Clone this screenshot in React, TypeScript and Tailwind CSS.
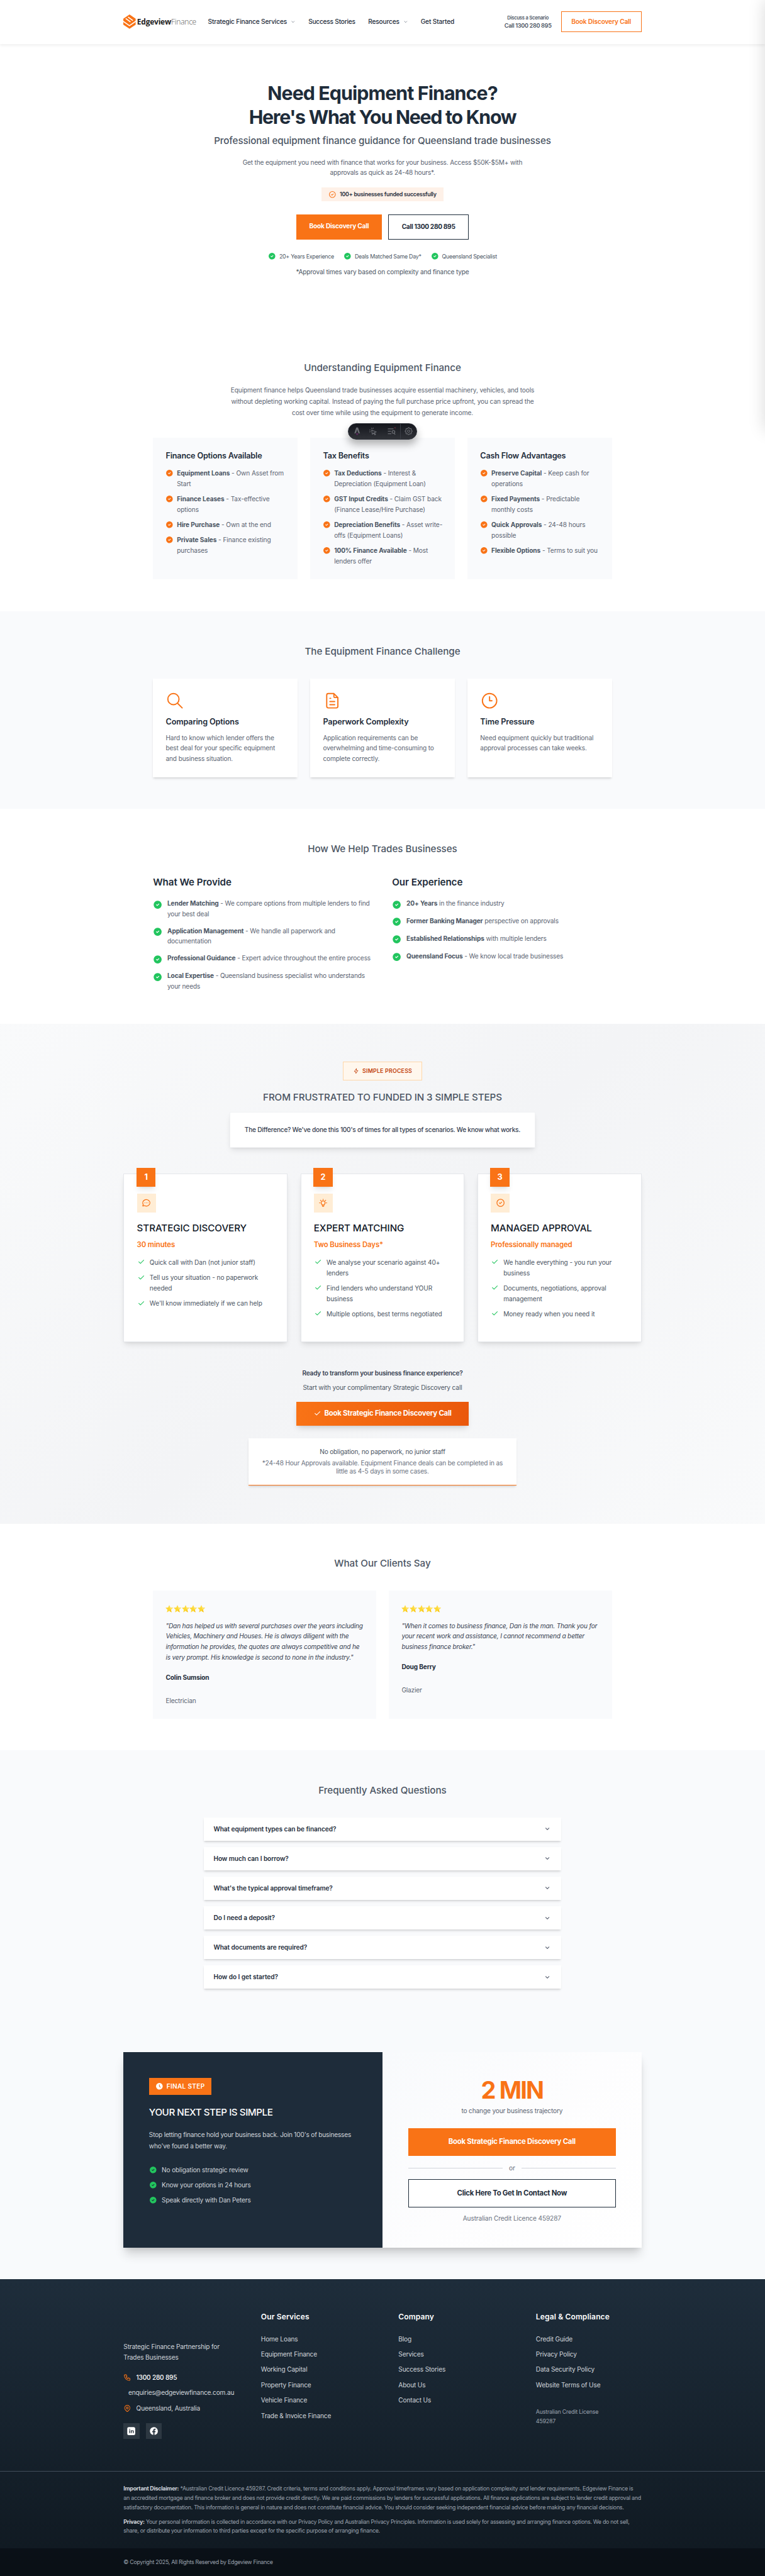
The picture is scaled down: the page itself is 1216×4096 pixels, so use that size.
import type { ReactNode } from "react";

function Svg({ d, className, sw = 2 }: { d: string; className: string; sw?: number }) {
  return (
    <svg viewBox="0 0 24 24" className={className} fill="none" stroke="currentColor" strokeWidth={sw} strokeLinecap="round" strokeLinejoin="round">
      <path d={d} />
    </svg>
  );
}

const P = {
  chevron: "M6 9l6 6l6 -6",
  check: "M5 12l5 5l10 -10",
  circleCheck: "M12 12m-9 0a9 9 0 1 0 18 0a9 9 0 1 0 -18 0M9 12l2 2l4 -4",
  search: "M10 10m-7 0a7 7 0 1 0 14 0a7 7 0 1 0 -14 0M21 21l-6 -6",
  file: "M14 3v4a1 1 0 0 0 1 1h4M17 21h-10a2 2 0 0 1 -2 -2v-14a2 2 0 0 1 2 -2h7l5 5v11a2 2 0 0 1 -2 2zM9 9h1M9 13h6M9 17h6",
  clock: "M3 12a9 9 0 1 0 18 0a9 9 0 0 0 -18 0M12 7v5h3",
  bolt: "M13 3v7h6l-8 11v-7h-6l8 -11",
  chat: "M3 20l1.3 -3.9c-2.324 -3.437 -1.426 -7.872 2.1 -10.374c3.526 -2.501 8.59 -2.296 11.845 .48c3.255 2.777 3.695 7.266 1.029 10.501c-2.666 3.235 -7.615 4.215 -11.574 2.293l-4.7 1M12 12v.01M8 12v.01M16 12v.01",
  bulb: "M3 12h1m8 -9v1m8 8h1m-15.4 -6.4l.7 .7m12.1 -.7l-.7 .7M9 16a5 5 0 1 1 6 0a3.5 3.5 0 0 0 -1 3a2 2 0 0 1 -4 0a3.5 3.5 0 0 0 -1 -3M9.7 17h4.6",
  phone: "M5 4h4l2 5l-2.5 1.5a11 11 0 0 0 5 5l1.5 -2.5l5 2v4a2 2 0 0 1 -2 2a16 16 0 0 1 -15 -15a2 2 0 0 1 2 -2",
  pin: "M9 11a3 3 0 1 0 6 0a3 3 0 0 0 -6 0M17.657 16.657l-4.243 4.243a2 2 0 0 1 -2.827 0l-4.244 -4.243a8 8 0 1 1 11.314 0z",
  gear: "M10.325 4.317c.426 -1.756 2.924 -1.756 3.35 0a1.724 1.724 0 0 0 2.573 1.066c1.543 -.94 3.31 .826 2.37 2.37a1.724 1.724 0 0 0 1.065 2.572c1.756 .426 1.756 2.924 0 3.35a1.724 1.724 0 0 0 -1.066 2.573c.94 1.543 -.826 3.31 -2.37 2.37a1.724 1.724 0 0 0 -2.572 1.065c-.426 1.756 -2.924 1.756 -3.35 0a1.724 1.724 0 0 0 -2.573 -1.066c-1.543 .94 -3.31 -.826 -2.37 -2.37a1.724 1.724 0 0 0 -1.065 -2.572c-1.756 -.426 -1.756 -2.924 0 -3.35a1.724 1.724 0 0 0 1.066 -2.573c-.94 -1.543 .826 -3.31 2.37 -2.37c1 .608 2.296 .07 2.572 -1.065zM9 12a3 3 0 1 0 6 0a3 3 0 0 0 -6 0",
};

function FilledCheck({ className }: { className: string }) {
  return (
    <svg viewBox="0 0 24 24" className={className} fill="currentColor">
      <path d="M17 3.34a10 10 0 1 1 -14.995 8.984l-.005 -.324l.005 -.324a10 10 0 0 1 14.995 -8.336zm-1.293 5.953a1 1 0 0 0 -1.32 -.083l-.094 .083l-3.293 3.292l-1.293 -1.292l-.094 -.083a1 1 0 0 0 -1.403 1.403l.083 .094l2 2l.094 .083a1 1 0 0 0 1.226 0l.094 -.083l4 -4l.083 -.094a1 1 0 0 0 -.083 -1.32z" />
    </svg>
  );
}

function FilledClock({ className }: { className: string }) {
  return (
    <svg viewBox="0 0 24 24" className={className} fill="currentColor">
      <path d="M17 3.34a10 10 0 1 1 -14.995 8.984l-.005 -.324l.005 -.324a10 10 0 0 1 14.995 -8.336zm-5 2.66a1 1 0 0 0 -.993 .883l-.007 .117v5l.009 .131a1 1 0 0 0 .197 .477l.087 .1l3 3l.094 .082a1 1 0 0 0 1.226 0l.094 -.083l.083 -.094a1 1 0 0 0 0 -1.226l-.083 -.094l-2.707 -2.708v-4.585l-.007 -.117a1 1 0 0 0 -.993 -.883z" />
    </svg>
  );
}

function Header() {
  return (
    <header className="relative h-[110px] bg-white shadow-[0_4px_6px_rgba(0,0,0,0.05)]">
      <div className="mx-auto flex h-full w-[1300px] items-center">
        <svg viewBox="30 52 93 107" className="h-9 w-[31px]">
          <path d="M77 52L123 83V128L77 159L30 128V83Z" fill="#f97316" />
          <path d="M26 101L76 136L128 100M48 82L84 108M66 71L102 97" fill="none" stroke="#fff" strokeWidth="8" />
        </svg>
        <span className="ml-[3px] w-[147px] font-['Open_Sans'] text-[19px] tracking-[-0.02em] whitespace-nowrap text-[#222]">
          <b>Edgeview</b>
          <span className="font-light text-[#555]">Finance</span>
        </span>
        <nav className="ml-[31px] flex items-center font-medium whitespace-nowrap text-[#1e2c3a]">
          <span className="w-[199px]">Strategic Finance Services</span>
          <Svg d={P.chevron} className="ml-2 size-3 text-gray-600" />
          <span className="ml-[33px] w-[118px] tracking-[-0.021em]">Success Stories</span>
          <span className="ml-[32px] w-[79px]">Resources</span>
          <Svg d={P.chevron} className="ml-[9px] size-3 text-gray-600" />
          <span className="ml-[32px]">Get Started</span>
        </nav>
        <div className="ml-auto mr-[24px] flex flex-col items-center font-semibold text-[#4b5563]">
          <span className="text-[12px] leading-[18px] tracking-[-0.027em]">Discuss a Scenario</span>
          <span className="text-[14.4px] leading-[18px] tracking-[-0.035em]">Call 1300 280 895</span>
        </div>
        <div className="flex h-[52px] w-[202px] items-center justify-center border-2 border-[#f97316] font-semibold text-[#f97316]">Book Discovery Call</div>
      </div>
    </header>
  );
}

function Hero() {
  return (
    <section className="flex h-[713px] flex-col items-center pt-[94px] text-[#4b5563]">
      <h1 className="text-center text-[48px] leading-[60px] font-bold tracking-[-0.043em] text-[#1e2c3a]">
        <span className="tracking-[-0.031em]">Need Equipment Finance?</span>
        <br />
        Here's What You Need to Know
      </h1>
      <p className="mt-[12px] text-[24px] leading-[36px] font-[450] tracking-[-0.008em]">Professional equipment finance guidance for Queensland trade businesses</p>
      <p className="mt-[22px] text-center leading-[26px] tracking-[-0.017em] text-[#5b6472]">
        Get the equipment you need with finance that works for your business. Access $50K-$5M+ with
        <br />
        approvals as quick as 24-48 hours*.
      </p>
      <div className="mt-[24px] flex h-9 w-[305px] items-center justify-center gap-2 bg-[#fef1e8] text-[14px] font-semibold tracking-[-0.0255em] text-[#1e2c3a]">
        <Svg d={P.circleCheck} className="size-5 text-[#f97316]" />
        100+ businesses funded successfully
      </div>
      <div className="mt-8 flex gap-4">
        <div className="flex h-[63px] w-[215px] items-center justify-center bg-[#f97316] pb-[3px] font-bold tracking-[-0.02em] text-white">Book Discovery Call</div>
        <div className="flex h-[63px] w-[202px] items-center justify-center border-2 border-[#1e2c3a] font-bold tracking-[-0.03em] text-[#1e2c3a]">Call 1300 280 895</div>
      </div>
      <div className="mt-[30px] flex gap-6 text-[14px] leading-6 tracking-[-0.03em]">
        {["20+ Years Experience", "Deals Matched Same Day*", "Queensland Specialist"].map((t) => (
          <span key={t} className="flex items-center gap-2">
            <FilledCheck className="size-5 text-[#22c55e]" />
            {t}
          </span>
        ))}
      </div>
      <p className="mt-[14px] leading-[26px] tracking-[-0.017em]">*Approval times vary based on complexity and finance type</p>
    </section>
  );
}

function Title({ children }: { children: ReactNode }) {
  return <h2 className="text-center text-[24px] leading-10 font-[450] tracking-[-0.002em] text-[#4b5563]">{children}</h2>;
}

type Item = [string, ReactNode];
const options: { title: string; items: Item[] }[] = [
  {
    title: "Finance Options Available",
    items: [
      ["Equipment Loans", <> - Own Asset from<br />Start</>],
      ["Finance Leases", <> - Tax-effective<br />options</>],
      ["Hire Purchase", " - Own at the end"],
      ["Private Sales", <> - Finance existing<br />purchases</>],
    ],
  },
  {
    title: "Tax Benefits",
    items: [
      ["Tax Deductions", <> - Interest &amp;<br />Depreciation (Equipment Loan)</>],
      ["GST Input Credits", <> - Claim GST back<br />(Finance Lease/Hire Purchase)</>],
      ["Depreciation Benefits", <> - Asset write-<br />offs (Equipment Loans)</>],
      ["100% Finance Available", <> - Most<br />lenders offer</>],
    ],
  },
  {
    title: "Cash Flow Advantages",
    items: [
      ["Preserve Capital", <> - Keep cash for<br />operations</>],
      ["Fixed Payments", <> - Predictable<br />monthly costs</>],
      ["Quick Approvals", <> - 24-48 hours<br />possible</>],
      ["Flexible Options", " - Terms to suit you"],
    ],
  },
];

function DevToolbar() {
  return (
    <div className="absolute top-[239px] left-[873px] z-10 flex h-[42px] w-[174px] items-center rounded-full border border-[#2b2e36] bg-linear-to-b from-[#15171d] to-[#303238] text-[#6b6d73] shadow-[0_12px_20px_rgba(0,0,0,0.3)]">
      <svg viewBox="0 0 20 24" className="ml-[13px] h-[22px] w-[18px]">
        <path d="M7.5 1h5L18 18l-5-2-3-9-3 9-5 2z" fill="currentColor" />
        <path d="M6 17c2 1 6 1 8 0 0 3-2 3-4 6-2-3-4-3-4-6z" fill="#5b2a5c" />
      </svg>
      <svg viewBox="0 0 24 24" className="ml-[22px] size-5" fill="none" stroke="currentColor" strokeWidth="2" strokeLinejoin="round" strokeLinecap="round">
        <path d="M7 7l14 6-6 2 4 5-2 2-4-6-4 4zM7 1v2M12 1l-1 2M1 7h2M1 13l2-1" />
      </svg>
      <svg viewBox="0 0 24 24" className="ml-[25px] size-[21px]" fill="none" stroke="currentColor" strokeWidth="2.2">
        <path d="M1 5h16M1 12h9M1 19h10M22 22l-3-4" />
        <circle cx="17" cy="14" r="4" />
        <circle cx="22" cy="2" r="3" fill="#4a2430" stroke="none" />
      </svg>
      <span className="ml-[11px] h-full w-px bg-[#3a3d45]" />
      <Svg d={P.gear} className="ml-[8px] size-6" sw={1.8} />
    </div>
  );
}

function Understanding() {
  return (
    <section className="relative h-[712px] pt-20">
      <Title>Understanding Equipment Finance</Title>
      <p className="mt-6 text-center leading-7 tracking-[-0.011em] text-[#5b6472]">
        Equipment finance helps Queensland trade businesses acquire essential machinery, vehicles, and tools
        <br />
        without depleting working capital. Instead of paying the full purchase price upfront, you can spread the
        <br />
        cost over time while using the equipment to generate income.
      </p>
      <DevToolbar />
      <div className="mx-auto mt-12 grid w-[1152px] grid-cols-3 gap-8">
        {options.map((c) => (
          <div key={c.title} className="h-[356px] bg-[#f9fafc] px-8 pt-8">
            <h3 className="text-[20px] leading-[28px] font-semibold tracking-[-0.016em] text-[#1e2c3a]">{c.title}</h3>
            <ul className="mt-4 flex flex-col gap-3 leading-[26.4px] tracking-[-0.009em] whitespace-nowrap text-[#5b6472]">
              {c.items.map(([b, t]) => (
                <li key={b} className="flex gap-2">
                  <FilledCheck className="mt-[3px] size-5 shrink-0 text-[#f97316]" />
                  <span>
                    <b className="text-[#4b5563]">{b}</b>
                    {t}
                  </span>
                </li>
              ))}
            </ul>
          </div>
        ))}
      </div>
    </section>
  );
}

const challenges: [string, string, ReactNode][] = [
  [P.search, "Comparing Options", <>Hard to know which lender offers the<br />best deal for your specific equipment<br />and business situation.</>],
  [P.file, "Paperwork Complexity", <>Application requirements can be<br />overwhelming and time-consuming to<br />complete correctly.</>],
  [P.clock, "Time Pressure", <>Need equipment quickly but traditional<br />approval processes can take weeks.</>],
];

function Challenge() {
  return (
    <section className="h-[496px] bg-[#f9fafc] pt-20">
      <Title>The Equipment Finance Challenge</Title>
      <div className="mx-auto mt-12 grid w-[1152px] grid-cols-3 gap-8">
        {challenges.map(([d, t, p]) => (
          <div key={t} className="h-[248px] bg-white px-8 pt-8 shadow-[0_4px_6px_-1px_rgba(0,0,0,0.12),0_2px_4px_-1px_rgba(0,0,0,0.06)]">
            <Svg d={d} className="size-12 text-[#f97316]" sw={1.5} />
            <h3 className="mt-4 text-[20px] leading-7 font-semibold tracking-[-0.012em] text-[#1e2c3a]">{t}</h3>
            <p className="mt-3 leading-[26.4px] tracking-[-0.013em] whitespace-nowrap text-[#5b6472]">{p}</p>
          </div>
        ))}
      </div>
    </section>
  );
}

const provide: Item[] = [
  ["Lender Matching", <> - We compare options from multiple lenders to find<br />your best deal</>],
  ["Application Management", <> - We handle all paperwork and<br />documentation</>],
  ["Professional Guidance", " - Expert advice throughout the entire process"],
  ["Local Expertise", <> - Queensland business specialist who understands<br />your needs</>],
];
const experience: Item[] = [
  ["20+ Years", " in the finance industry"],
  ["Former Banking Manager", " perspective on approvals"],
  ["Established Relationships", " with multiple lenders"],
  ["Queensland Focus", " - We know local trade businesses"],
];

function HelpList({ title, items }: { title: string; items: Item[] }) {
  return (
    <div>
      <h3 className="text-[24px] leading-8 font-semibold tracking-[-0.006em] text-[#1e2c3a]">{title}</h3>
      <ul className="mt-6 flex flex-col gap-4 leading-[26.4px] tracking-[-0.013em] whitespace-nowrap text-[#5b6472]">
        {items.map(([b, t]) => (
          <li key={b} className="flex gap-3">
            <FilledCheck className="mt-1 size-6 shrink-0 text-[#22c55e]" />
            <span>
              <b className="text-[#4b5563]">{b}</b>
              {t}
            </span>
          </li>
        ))}
      </ul>
    </div>
  );
}

function Help() {
  return (
    <section className="h-[539px] pt-20">
      <Title>How We Help Trades Businesses</Title>
      <div className="mx-auto mt-12 grid w-[1152px] grid-cols-2 gap-12">
        <HelpList title="What We Provide" items={provide} />
        <HelpList title="Our Experience" items={experience} />
      </div>
    </section>
  );
}

const steps: { icon: string; title: string; sub: string; items: ReactNode[] }[] = [
  { icon: P.chat, title: "STRATEGIC DISCOVERY", sub: "30 minutes", items: ["Quick call with Dan (not junior staff)", <>Tell us your situation - no paperwork<br />needed</>, "We'll know immediately if we can help"] },
  { icon: P.bulb, title: "EXPERT MATCHING", sub: "Two Business Days*", items: [<>We analyse your scenario against 40+<br />lenders</>, <>Find lenders who understand YOUR<br />business</>, "Multiple options, best terms negotiated"] },
  { icon: P.circleCheck, title: "MANAGED APPROVAL", sub: "Professionally managed", items: [<>We handle everything - you run your<br />business</>, <>Documents, negotiations, approval<br />management</>, "Money ready when you need it"] },
];

function Process() {
  return (
    <section className="flex h-[1255.5px] flex-col items-center bg-linear-135 from-[#f9fafb] via-[#f3f4f6] to-[#f9fafb] pt-[96px]">
      <div className="flex h-[46px] w-[200px] items-center justify-center gap-2 border border-[#fed7aa] bg-[#fff7ed] text-[14px] font-semibold tracking-[0.02em] text-[#c2410c]">
        <Svg d={P.bolt} className="size-4" />
        SIMPLE PROCESS
      </div>
      <h2 className="mt-[23px] text-[24px] leading-10 font-[450] tracking-[-0.007em] text-[#4b5563]">FROM FRUSTRATED TO FUNDED IN 3 SIMPLE STEPS</h2>
      <div className="mt-[17px] flex h-[90px] w-[768px] items-center justify-center border border-[#f1f2f4] bg-white font-medium tracking-[-0.0245em] text-[#374151] shadow-[0_10px_15px_-3px_rgba(0,0,0,0.1),0_4px_6px_-2px_rgba(0,0,0,0.06)]">
        The Difference? We've done this 100's of times for all types of scenarios. We know what works.
      </div>
      <div className="mt-[65px] grid w-[1300px] grid-cols-3 gap-8">
        {steps.map((s, i) => (
          <div key={s.title} className="relative h-[422px] border border-[#e5e7eb] bg-white pt-12 pl-8 shadow-[0_10px_15px_-3px_rgba(0,0,0,0.12),0_4px_6px_-2px_rgba(0,0,0,0.05)]">
            <div className="absolute -top-[17px] left-[31px] flex size-12 items-center justify-center bg-[#f97316] text-[20px] font-bold text-white shadow-lg">{i + 1}</div>
            <div className="flex size-12 items-center justify-center bg-[#ffedd5]">
              <Svg d={s.icon} className="size-6 text-[#f97316]" />
            </div>
            <h3 className="mt-6 text-[24px] leading-8 font-medium tracking-[-0.005em] whitespace-nowrap text-[#111827]">{s.title}</h3>
            <p className="mt-3 text-[18px] leading-7 font-semibold tracking-[-0.01em] text-[#f97316]">{s.sub}</p>
            <ul className="mt-4 flex flex-col gap-3 leading-[26.4px] tracking-[-0.008em] whitespace-nowrap text-[#4b5563]">
              {s.items.map((t, k) => (
                <li key={k} className="flex gap-3">
                  <Svg d={P.check} className="mt-[2px] size-5 shrink-0 text-[#22c55e]" />
                  <span>{t}</span>
                </li>
              ))}
            </ul>
          </div>
        ))}
      </div>
      <p className="mt-[66px] leading-[27px] font-semibold tracking-[-0.0226em] text-[#374151]">Ready to transform your business finance experience?</p>
      <p className="mt-[8px] leading-[26px] tracking-[-0.012em] text-[#4b5563]">Start with your complimentary Strategic Discovery call</p>
      <div className="mt-[23px] flex h-[60px] w-[433px] items-center justify-center gap-[7px] bg-linear-to-r from-[#f97316] to-[#ea580c] text-[18px] font-bold tracking-[-0.02em] text-white shadow-[0_10px_15px_-3px_rgba(0,0,0,0.15),0_4px_6px_-2px_rgba(0,0,0,0.05)]">
        <Svg d={P.check} className="size-5" />
        Book Strategic Finance Discovery Call
      </div>
      <div className="mt-8 h-[118px] w-[672px] border-b-2 border-[#f97316] bg-white pt-[21px] text-center leading-7 tracking-[-0.018em] text-[#4b5563] shadow-[0_4px_6px_-1px_rgba(0,0,0,0.12),0_2px_4px_-1px_rgba(0,0,0,0.06)]">
        No obligation, no paperwork, no junior staff
        <p className="mt-1 leading-5 text-[#6b7280]">
          *24-48 Hour Approvals available. Equipment Finance deals can be completed in as
          <br />
          little as 4-5 days in some cases.
        </p>
      </div>
    </section>
  );
}

function Stars() {
  return (
    <div className="flex h-[26px] items-center gap-px">
      {[0, 1, 2, 3, 4].map((i) => (
        <svg key={i} viewBox="0 0 24 24" className="size-[19px]">
          <path d="M12 .5l3.500 7.700 8.400.9-6.300 5.700 1.800 8.400L12 19l-7.400 4.200 1.800-8.400L.1 9.100l8.400-.9z" fill="#fdd835" />
          <path d="M12 .5l1.500 9.500 4.100 4.800 6.300-5.700-8.400-.9z" fill="#ffe36b" />
          <path d="M17 13l2.400 10.200-5-3z" fill="#f4b400" opacity=".6" />
        </svg>
      ))}
    </div>
  );
}

const reviews: [ReactNode, string, string][] = [
  [<>"Dan has helped us with several purchases over the years including<br />Vehicles, Machinery and Houses. He is always diligent with the<br />information he provides, the quotes are always competitive and he<br />is very prompt. His knowledge is second to none in the industry."</>, "Colin Sumsion", "Electrician"],
  [<>"When it comes to business finance, Dan is the man. Thank you for<br />your recent work and assistance, I cannot recommend a better<br />business finance broker."</>, "Doug Berry", "Glazier"],
];

function Reviews() {
  return (
    <section className="h-[569.5px] pt-20">
      <Title>What Our Clients Say</Title>
      <div className="mx-auto mt-12 grid w-[1152px] grid-cols-2 gap-8">
        {reviews.map(([q, n, r]) => (
          <div key={n} className="h-[322px] bg-[#f9fafc] px-8 pt-8 leading-[26.4px] whitespace-nowrap">
            <Stars />
            <p className="mt-[17px] tracking-[-0.018em] text-[#374151] italic">{q}</p>
            <p className="mt-6 font-bold tracking-[-0.015em] text-[#1e2c3a]">{n}</p>
            <p className="mt-8 text-[#5b6472]">{r}</p>
          </div>
        ))}
      </div>
    </section>
  );
}

const faqs = ["What equipment types can be financed?", "How much can I borrow?", "What's the typical approval timeframe?", "Do I need a deposit?", "What documents are required?", "How do I get started?"];

function Faq() {
  return (
    <section className="h-[678.5px] bg-[#f9fafc] pt-20">
      <Title>Frequently Asked Questions</Title>
      <div className="mx-auto mt-12 flex w-[896px] flex-col gap-4">
        {faqs.map((q) => (
          <div key={q} className="flex h-[58.4px] items-center justify-between bg-white pr-[26px] pl-6 font-semibold tracking-[-0.007em] text-[#1e2c3a] shadow-[0_4px_6px_-1px_rgba(0,0,0,0.12),0_2px_4px_-1px_rgba(0,0,0,0.08)]">
            {q}
            <Svg d={P.chevron} className="size-4 text-[#6b7280]" sw={3} />
          </div>
        ))}
      </div>
    </section>
  );
}

function FinalStep() {
  return (
    <section className="h-[649.5px] bg-[#f8fafc] pt-[79.5px]">
      <div className="mx-auto grid h-[490px] w-[1300px] grid-cols-2 shadow-[0_20px_25px_-5px_rgba(0,0,0,0.16),0_8px_12px_-5px_rgba(0,0,0,0.1)]">
        <div className="bg-[#1e2c3a] px-16 pt-16 whitespace-nowrap text-[#d1d5db]">
          <div className="flex h-[43px] w-[156px] items-center gap-2 bg-[#f97316] pl-4 font-semibold tracking-[0.027em] text-white">
            <FilledClock className="size-5" />
            FINAL STEP
          </div>
          <h2 className="mt-[23px] text-[24px] leading-10 font-[450] tracking-[-0.03em] text-white">YOUR NEXT STEP IS SIMPLE</h2>
          <p className="mt-6 leading-[27.6px] tracking-[-0.02em]">
            Stop letting finance hold your business back. Join 100's of businesses
            <br />
            who've found a better way.
          </p>
          <ul className="mt-8 flex flex-col gap-3 leading-[26.4px] tracking-[-0.016em]">
            {["No obligation strategic review", "Know your options in 24 hours", "Speak directly with Dan Peters"].map((t) => (
              <li key={t} className="flex items-center gap-3">
                <FilledCheck className="size-5 text-[#22c55e]" />
                {t}
              </li>
            ))}
          </ul>
        </div>
        <div className="flex flex-col items-center bg-linear-135 from-[#f8fafc] via-[#fdfdfe] to-white px-16 pt-16 text-[#5b6472]">
          <div className="text-[60px] leading-[60px] font-bold tracking-[-0.048em] text-[#f97316]">2 MIN</div>
          <p className="mt-[10px] leading-[26px] tracking-[-0.015em]">to change your business trajectory</p>
          <div className="mt-[31px] flex h-[68px] w-full items-center justify-center bg-[#f97316] text-[18px] font-bold tracking-[-0.02em] text-white">Book Strategic Finance Discovery Call</div>
          <div className="mt-[18px] flex w-full items-center gap-4 leading-[26px] text-[#6b7280]">
            <span className="h-px flex-1 bg-[#d1d5db]" />
            or
            <span className="h-px flex-1 bg-[#d1d5db]" />
          </div>
          <div className="mt-[15px] flex h-[72px] w-full items-center justify-center border-2 border-[#1e2c3a] bg-white text-[18px] font-bold tracking-[-0.024em] text-[#1e2c3a]">Click Here To Get In Contact Now</div>
          <p className="mt-[14px] leading-[26px] tracking-[-0.011em] text-[#6b7280]">Australian Credit Licence 459287</p>
        </div>
      </div>
    </section>
  );
}

const columns: [string, string[]][] = [
  ["Our Services", ["Home Loans", "Equipment Finance", "Working Capital", "Property Finance", "Vehicle Finance", "Trade & Invoice Finance"]],
  ["Company", ["Blog", "Services", "Success Stories", "About Us", "Contact Us"]],
  ["Legal & Compliance", ["Credit Guide", "Privacy Policy", "Data Security Policy", "Website Terms of Use"]],
];

function Footer() {
  return (
    <footer className="h-[744px] bg-linear-to-b from-[#1e2d3b] to-[#0f1820] text-[#d1d5db]">
      <div className="mx-auto grid h-[481px] w-[1300px] grid-cols-4 gap-20 pt-20 whitespace-nowrap">
        <div className="pt-[76px]">
          <p className="leading-[27px]">
            Strategic Finance Partnership for
            <br />
            Trades Businesses
          </p>
          <p className="mt-[23px] flex items-center gap-3 leading-[26.4px] font-medium tracking-[-0.02em] text-white">
            <Svg d={P.phone} className="size-5 text-[#f97316]" />
            1300 280 895
          </p>
          <p className="mt-3 pl-3 leading-[26.4px] tracking-[-0.017em]">enquiries@edgeviewfinance.com.au</p>
          <p className="mt-3 flex items-center gap-3 leading-[26.4px]">
            <Svg d={P.pin} className="size-5 text-[#f97316]" />
            Queensland, Australia
          </p>
          <div className="mt-[24px] flex gap-4 text-white">
            <span className="flex size-10 items-center justify-center bg-white/10">
              <svg viewBox="0 0 24 24" className="size-6" fill="currentColor" fillRule="evenodd">
                <path d="M6 2h12a4 4 0 0 1 4 4v12a4 4 0 0 1-4 4H6a4 4 0 0 1-4-4V6a4 4 0 0 1 4-4zM7 10v7h2.200v-7zM8.100 6.300a1.300 1.300 0 1 0 0 2.600a1.300 1.300 0 1 0 0-2.600zM11 10v7h2.200v-4a1.500 1.500 0 0 1 3 0v4h2.200v-4.300c0-3.200-3.600-3.500-5.200-1.700V10z" />
              </svg>
            </span>
            <span className="flex size-10 items-center justify-center bg-white/10">
              <svg viewBox="0 0 24 24" className="size-6" fill="currentColor">
                <path d="M22 12a10 10 0 1 0-11.560 9.880v-6.990H7.900V12h2.540V9.800c0-2.510 1.490-3.890 3.780-3.890 1.090 0 2.240.2 2.240.2v2.460h-1.260c-1.240 0-1.630.77-1.630 1.560V12h2.780l-.45 2.890h-2.330v6.990A10 10 0 0 0 22 12z" />
              </svg>
            </span>
          </div>
        </div>
        {columns.map(([h, links]) => (
          <div key={h}>
            <h3 className="text-[19px] leading-7 font-semibold tracking-[0.012em] text-white">{h}</h3>
            <ul className="mt-[28px] flex flex-col gap-[12.2px] leading-[26.4px] tracking-[-0.014em]">
              {links.map((l) => (
                <li key={l}>{l}</li>
              ))}
            </ul>
            {h === "Legal & Compliance" && (
              <p className="mt-[42px] text-[14px] leading-6 tracking-[-0.023em] text-[#9ca3af]">
                Australian Credit License
                <br />
                459287
              </p>
            )}
          </div>
        ))}
      </div>
      <div className="h-[194px] border-t border-[#414d5a]">
        <div className="mx-auto w-[1300px] pt-8 text-[14px] leading-[23px] tracking-[-0.0303em] whitespace-nowrap text-[#9ca3af]">
          <p>
            <b className="text-[#d1d5db]">Important Disclaimer:</b> *Australian Credit Licence 459287. Credit criteria, terms and conditions apply. Approval timeframes vary based on application complexity and lender requirements. Edgeview Finance is
            <br />
            an accredited mortgage and finance broker and does not provide credit directly. We are paid commissions by lenders for successful applications. All finance applications are subject to lender credit approval and
            <br />
            satisfactory documentation. This information is general in nature and does not constitute financial advice. You should consider seeking independent financial advice before making any financial decisions.
          </p>
          <p className="mt-[14px]">
            <b className="text-[#d1d5db]">Privacy:</b> Your personal information is collected in accordance with our Privacy Policy and Australian Privacy Principles. Information is used solely for assessing and arranging finance options. We do not sell,
            <br />
            share, or distribute your information to third parties except for the specific purpose of arranging finance.
          </p>
        </div>
      </div>
      <div className="h-[69px] bg-[#080d12]/70">
        <div className="mx-auto flex h-full w-[1300px] items-center text-[14px] tracking-[-0.031em] text-[#9ca3af]">© Copyright 2025, All Rights Reserved by Edgeview Finance</div>
      </div>
    </footer>
  );
}

export default function App() {
  return (
    <div className="h-[4096px] w-[1216px] overflow-hidden bg-white">
      <div className="relative w-[1920px] overflow-hidden bg-white font-[Inter,sans-serif] text-[16px] tracking-[-0.015em] [zoom:0.633333]">
        <Header />
        <Hero />
        <Understanding />
        <Challenge />
        <Help />
        <Process />
        <Reviews />
        <Faq />
        <FinalStep />
        <Footer />
        <div className="absolute top-0 left-[1920px] h-[1080px] w-[300px] shadow-[0_0_40px_rgba(0,0,0,0.15)]" />
      </div>
    </div>
  );
}
